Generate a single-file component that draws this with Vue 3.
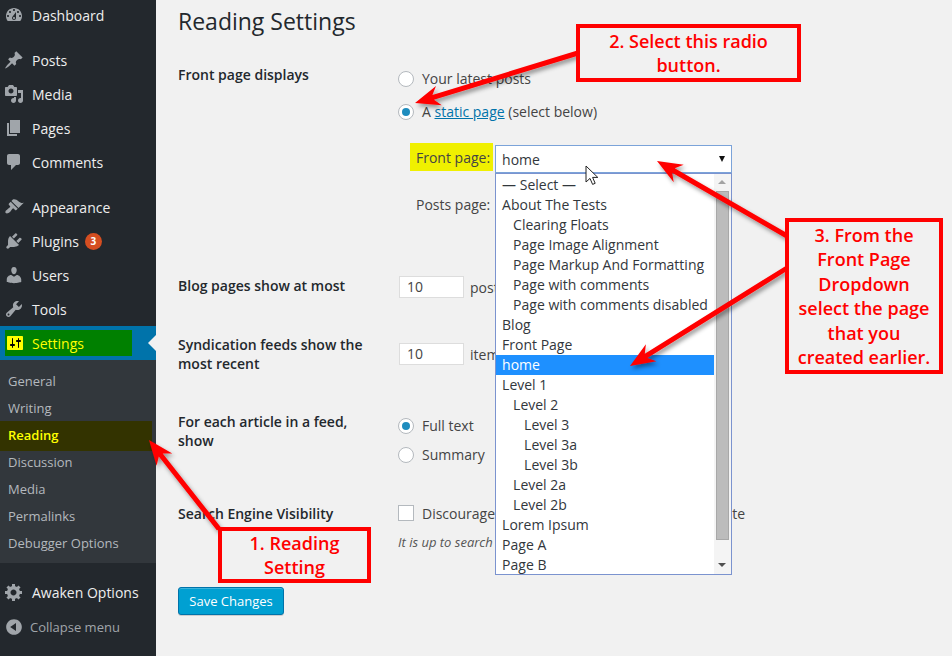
<script setup>
const mainItems = [
  { label: 'Dashboard', icon: 'dashboard' },
  { gap: true },
  { label: 'Posts', icon: 'post' },
  { label: 'Media', icon: 'media' },
  { label: 'Pages', icon: 'page' },
  { label: 'Comments', icon: 'comments' },
  { gap: true },
  { label: 'Appearance', icon: 'appearance' },
  { label: 'Plugins', icon: 'plugins', badge: 3 },
  { label: 'Users', icon: 'users' },
  { label: 'Tools', icon: 'tools' }
]

const icons = {
  dashboard: 'M3.76 16h12.48c1.1-1.37 1.76-3.11 1.76-5 0-4.42-3.58-8-8-8s-8 3.58-8 8c0 1.89.66 3.63 1.76 5zM10 4c.55 0 1 .45 1 1s-.45 1-1 1-1-.45-1-1 .45-1 1-1zM6 6c.55 0 1 .45 1 1s-.45 1-1 1-1-.45-1-1 .45-1 1-1zm8 0c.55 0 1 .45 1 1s-.45 1-1 1-1-.45-1-1 .45-1 1-1zm-5.37 5.55L12 7v6c0 1.1-.9 2-2 2s-2-.9-2-2c0-.57.24-1.08.63-1.45zM4 10c.55 0 1 .45 1 1s-.45 1-1 1-1-.45-1-1 .45-1 1-1zm12 0c.55 0 1 .45 1 1s-.45 1-1 1-1-.45-1-1 .45-1 1-1zm-5 3c0-.55-.45-1-1-1s-1 .45-1 1 .45 1 1 1 1-.45 1-1z',
  post: 'M10.44 3.02l1.82-1.82 6.36 6.35-1.83 1.82c-1.05-.68-2.48-.57-3.41.36l-.75.75c-.92.93-1.04 2.35-.35 3.41l-1.83 1.82-2.41-2.41-2.8 2.79c-.42.42-3.38 2.71-3.8 2.29s1.86-3.39 2.28-3.81l2.79-2.79L4.1 9.36l1.83-1.82c1.05.69 2.48.57 3.4-.36l.75-.75c.93-.92 1.05-2.35.36-3.41z',
  media: 'M13 11V4c0-.55-.45-1-1-1h-1.67L9 1H5L3.67 3H2c-.55 0-1 .45-1 1v7c0 .55.45 1 1 1h10c.55 0 1-.45 1-1zM7 4.5c1.38 0 2.5 1.12 2.5 2.5S8.38 9.5 7 9.5 4.5 8.38 4.5 7 5.62 4.5 7 4.5zM14 6h5v10.5c0 1.38-1.12 2.5-2.5 2.5S14 17.88 14 16.5s1.12-2.5 2.5-2.5c.17 0 .34.02.5.05V9h-3V6zm-4 8.05V13h2v3.5c0 1.38-1.12 2.5-2.5 2.5S7 17.88 7 16.5 8.12 14 9.5 14c.17 0 .34.02.5.05z',
  page: 'M6 15V2h10v13H6zm-1 1h8v2H3V5h2v11z',
  comments: 'M5 2h9c1.1 0 2 .9 2 2v7c0 1.1-.9 2-2 2h-2l-5 5v-5H5c-1.1 0-2-.9-2-2V4c0-1.1.9-2 2-2z',
  appearance: 'M14.48 11.06L7.41 3.99l1.5-1.5c.5-.56 2.3-.47 3.51.32 1.21.8 1.43 1.28 2.91 2.1 1.18.64 2.45 1.26 4.45.85zm-.71.71L6.7 4.7 4.93 6.47c-.39.39-.39 1.02 0 1.41l1.06 1.06c.39.39.39 1.03 0 1.42-.6.6-1.43 1.11-2.21 1.69-.35.26-.7.53-1.01.84C1.43 13.23.91 15.24 1.76 16.09c.85.85 2.86.33 4.22-1.01.31-.31.58-.66.84-1.01.58-.78 1.09-1.61 1.69-2.21.39-.39 1.03-.39 1.42 0l1.06 1.06c.39.39 1.02.39 1.41 0z',
  plugins: 'M13.11 4.36L9.87 7.6 8 5.73l3.24-3.24c.35-.34 1.05-.2 1.56.32.52.51.66 1.21.31 1.55zm-8 1.77l.91-1.12 9.01 9.01-1.19.84c-.71.71-2.63 1.16-3.82 1.16H6.14L4.9 17.26c-.59.59-1.54.59-2.12 0-.59-.58-.59-1.53 0-2.12l1.24-1.24v-3.88c0-1.13.4-3.19 1.09-3.89zm7.26 3.97l3.24-3.24c.34-.35 1.04-.21 1.55.31.52.51.66 1.21.31 1.55l-3.24 3.25z',
  users: 'M10 9.25c-2.27 0-2.73-3.44-2.73-3.44C7 4.02 7.82 2 9.97 2c2.16 0 2.98 2.02 2.71 3.81 0 0-.41 3.44-2.68 3.44zm0 2.57L12.72 10c2.39 0 4.52 2.33 4.52 4.53v2.49s-3.65 1.13-7.24 1.13c-3.65 0-7.24-1.13-7.24-1.13v-2.49c0-2.25 1.94-4.48 4.47-4.48z',
  tools: 'M16.68 9.77c-1.34 1.34-3.3 1.67-4.95.99l-5.41 6.52c-.99.99-2.59.99-3.58 0s-.99-2.59 0-3.57l6.52-5.42c-.68-1.65-.35-3.61.99-4.95 1.28-1.28 3.12-1.62 4.72-1.06l-2.89 2.89 2.82 2.82 2.86-2.87c.53 1.58.18 3.39-1.08 4.65zM3.81 16.21c.4.39 1.04.39 1.43 0 .4-.4.4-1.04 0-1.43-.39-.4-1.03-.4-1.43 0-.39.39-.39 1.03 0 1.43z',
  settings: 'M18 16V4c0-.55-.45-1-1-1H3c-.55 0-1 .45-1 1v12c0 .55.45 1 1 1h14c.55 0 1-.45 1-1zM8 11h1c.55 0 1 .45 1 1s-.45 1-1 1H8v1.5c0 .28-.22.5-.5.5s-.5-.22-.5-.5V13H6c-.55 0-1-.45-1-1s.45-1 1-1h1V5.5c0-.28.22-.5.5-.5s.5.22.5.5V11zm5-2h-1c-.55 0-1-.45-1-1s.45-1 1-1h1V5.5c0-.28.22-.5.5-.5s.5.22.5.5V7h1c.55 0 1 .45 1 1s-.45 1-1 1h-1v5.5c0 .28-.22.5-.5.5s-.5-.22-.5-.5V9z',
  gear: 'M18 12h-2.18c-.17.7-.44 1.35-.81 1.93l1.54 1.54-2.1 2.1-1.54-1.54c-.58.36-1.23.63-1.91.79V19H8v-2.18c-.68-.16-1.33-.43-1.91-.79l-1.54 1.54-2.12-2.12 1.54-1.54c-.36-.58-.63-1.23-.79-1.91H1V9.03h2.17c.16-.7.44-1.35.8-1.94L2.43 5.55l2.1-2.1 1.54 1.54c.58-.37 1.24-.64 1.93-.81V2h3v2.18c.68.16 1.33.43 1.91.79l1.54-1.54 2.12 2.12-1.54 1.54c.36.59.64 1.24.8 1.94H18V12zm-8.5 1.5c1.66 0 3-1.34 3-3s-1.34-3-3-3-3 1.34-3 3 1.34 3 3 3z',
  collapse: 'M10 2.16c4.33 0 7.84 3.51 7.84 7.84s-3.51 7.84-7.84 7.84S2.16 14.33 2.16 10 5.71 2.16 10 2.16zm2 11.72V6.12L6.18 9.97z'
}

const subItems = ['General', 'Writing', 'Reading', 'Discussion', 'Media', 'Permalinks', 'Debugger Options']

const pages = [
  { name: '— Select —', level: 0 },
  { name: 'About The Tests', level: 0 },
  { name: 'Clearing Floats', level: 1 },
  { name: 'Page Image Alignment', level: 1 },
  { name: 'Page Markup And Formatting', level: 1 },
  { name: 'Page with comments', level: 1 },
  { name: 'Page with comments disabled', level: 1 },
  { name: 'Blog', level: 0 },
  { name: 'Front Page', level: 0 },
  { name: 'home', level: 0, selected: true },
  { name: 'Level 1', level: 0 },
  { name: 'Level 2', level: 1 },
  { name: 'Level 3', level: 2 },
  { name: 'Level 3a', level: 2 },
  { name: 'Level 3b', level: 2 },
  { name: 'Level 2a', level: 1 },
  { name: 'Level 2b', level: 1 },
  { name: 'Lorem Ipsum', level: 0 },
  { name: 'Page A', level: 0 },
  { name: 'Page B', level: 0 }
]

const arrows = [
  { from: [219, 529], tip: [149, 440] },
  { from: [578, 53], tip: [415, 103] },
  { from: [787, 236], tip: [657, 161] },
  { from: [787, 268], tip: [630, 366] }
]

// shaft plus a wedge head, pointing from -> tip
const arrowPoints = ({ from, tip }) => {
  const dx = tip[0] - from[0]
  const dy = tip[1] - from[1]
  const len = Math.hypot(dx, dy)
  const ux = dx / len
  const uy = dy / len
  const nx = -uy
  const ny = ux
  const at = (along, side) =>
    `${(tip[0] - ux * along + nx * side).toFixed(1)},${(tip[1] - uy * along + ny * side).toFixed(1)}`
  const headLen = 25
  return [
    at(len, 2.5),
    at(headLen - 6, 2.5),
    at(headLen, 10),
    at(0, 0),
    at(headLen, -10),
    at(headLen - 6, -2.5),
    at(len, -2.5)
  ].join(' ')
}
</script>

<template>
  <div class="page">
    <aside class="sidebar">
      <ul class="menu">
        <template v-for="(item, i) in mainItems" :key="i">
          <li v-if="item.gap" class="menu-gap"></li>
          <li v-else class="menu-item">
            <svg class="menu-icon" viewBox="0 0 20 20"><path :d="icons[item.icon]" /></svg>
            <span>{{ item.label }}</span>
            <span v-if="item.badge" class="badge">{{ item.badge }}</span>
          </li>
        </template>
        <li class="menu-item current">
          <div class="settings-mark">
            <svg class="menu-icon" viewBox="0 0 20 20">
              <rect x="3" y="4" width="14" height="12" fill="#000" />
              <path :d="icons.settings" fill="#ff0" />
            </svg>
            <span>Settings</span>
          </div>
          <i class="current-notch"></i>
        </li>
      </ul>
      <ul class="submenu">
        <li v-for="sub in subItems" :key="sub" :class="{ active: sub === 'Reading' }">{{ sub }}</li>
      </ul>
      <ul class="menu lower">
        <li class="menu-item">
          <svg class="menu-icon" viewBox="0 0 20 20"><path :d="icons.gear" /></svg>
          <span>Awaken Options</span>
        </li>
        <li class="menu-item collapse">
          <svg class="menu-icon" viewBox="0 0 20 20"><path :d="icons.collapse" /></svg>
          <span>Collapse menu</span>
        </li>
      </ul>
    </aside>

    <main class="content">
      <h1>Reading Settings</h1>

      <section class="row front-row">
        <div class="row-label">Front page displays</div>
        <div class="row-field">
          <label class="choice first"><i class="radio"></i>Your latest posts</label>
          <label class="choice second"><i class="radio checked"></i>A&nbsp;<a class="link">static page</a>&nbsp;(select below)</label>
          <div class="page-select">
            <span class="select-label marked">Front page:</span>
            <div class="select-box">
              <span>home</span>
              <i class="select-caret"></i>
              <div class="dropdown">
                <ul class="options">
                  <li
                    v-for="p in pages"
                    :key="p.name"
                    :class="['option', 'lv' + p.level, { selected: p.selected }]"
                  >{{ p.name }}</li>
                </ul>
                <div class="scrollbar">
                  <i class="scroll-up"></i>
                  <div class="scroll-track"><div class="scroll-thumb"></div></div>
                  <i class="scroll-down"></i>
                </div>
              </div>
            </div>
          </div>
          <div class="page-select posts">
            <span class="select-label">Posts page:</span>
          </div>
        </div>
      </section>

      <section class="row blog-row">
        <div class="row-label">Blog pages show at most</div>
        <div class="row-field inline">
          <span class="num-input">10</span>
          <span>posts per page</span>
        </div>
      </section>

      <section class="row feeds-row">
        <div class="row-label">Syndication feeds show the most recent</div>
        <div class="row-field inline feeds-field">
          <span class="num-input">10</span>
          <span>items</span>
        </div>
      </section>

      <section class="row article-row">
        <div class="row-label">For each article in a feed, show</div>
        <div class="row-field article-field">
          <label class="choice"><i class="radio checked"></i>Full text</label>
          <label class="choice third"><i class="radio"></i>Summary</label>
        </div>
      </section>

      <section class="row search-row">
        <div class="row-label">Search Engine Visibility</div>
        <div class="row-field search-field">
          <label class="choice"><i class="checkbox"></i>Discourage search engines from indexing this site</label>
          <p class="hint">It is up to search engines to honor this request.</p>
        </div>
      </section>

      <button class="save" type="button">Save Changes</button>
    </main>

    <svg class="arrows" viewBox="0 0 952 656">
      <defs>
        <filter id="arrow-shadow" x="-20%" y="-20%" width="140%" height="140%">
          <feDropShadow dx="2" dy="3" stdDeviation="2" flood-color="#000" flood-opacity="0.4" />
        </filter>
      </defs>
      <polygon
        v-for="(a, i) in arrows"
        :key="i"
        :points="arrowPoints(a)"
        fill="#ff0000"
        filter="url(#arrow-shadow)"
      />
    </svg>

    <svg class="cursor" width="14" height="22" viewBox="0 0 14 22">
      <path d="M1 1v16l4-3.6 2.6 6 2.6-1.1-2.6-5.9h5.2z" fill="#fff" stroke="#222" stroke-width="1" />
    </svg>

    <div class="note note-reading">1. Reading Setting</div>
    <div class="note note-radio">2. Select this radio button.</div>
    <div class="note note-front">3. From the Front Page Dropdown select the page that you created earlier.</div>
  </div>
</template>

<style scoped>
.page {
  position: relative;
  display: flex;
  width: 952px;
  height: 656px;
  overflow: hidden;
  background: #f1f1f1;
  font-family: "Open Sans", "Liberation Sans", sans-serif;
  font-size: 14px;
  color: #444;
}

ul {
  list-style: none;
  margin: 0;
  padding: 0;
}

/* sidebar */
.sidebar {
  flex: 0 0 156px;
  background: #23282d;
  color: #eee;
}

.menu-item {
  position: relative;
  display: flex;
  align-items: center;
  height: 34px;
  padding-left: 4px;
  box-sizing: border-box;
}

.menu:first-child {
  margin-top: -2px;
}

.menu-gap {
  height: 11px;
}

.menu-icon {
  flex: 0 0 20px;
  width: 20px;
  height: 20px;
  margin-right: 8px;
  fill: #a0a5aa;
}

.badge {
  width: 17px;
  height: 17px;
  margin-left: 6px;
  border-radius: 50%;
  background: #d54e21;
  color: #fff;
  font-size: 10px;
  font-weight: 700;
  line-height: 17px;
  text-align: center;
}

.current {
  background: #0073aa;
  color: #ff0;
}

.settings-mark {
  display: flex;
  align-items: center;
  width: 127px;
  height: 26px;
  margin-left: 1px;
  background: #008000;
}

.settings-mark .menu-icon {
  margin-right: 7px;
}

.current-notch {
  position: absolute;
  right: 0;
  top: 9px;
  border: 8px solid transparent;
  border-right-color: #f1f1f1;
  border-left-width: 0;
}

.submenu {
  padding: 8px 0 6px;
  background: #32373c;
  color: #b4b9be;
  font-size: 13px;
}

.submenu li {
  height: 27px;
  padding-left: 8px;
  line-height: 26px;
}

.submenu .active {
  position: relative;
  color: #ff0;
  font-weight: 600;
  z-index: 0;
}

.submenu .active::before {
  content: '';
  position: absolute;
  left: 0;
  top: -1px;
  width: 152px;
  height: 30px;
  background: #333300;
  z-index: -1;
}

.lower {
  margin-top: 12px;
}

.collapse {
  margin-top: 1px;
  color: #a0a5aa;
  font-size: 13px;
}

.collapse .menu-icon {
  margin-right: 6px;
}

/* settings form */
.content {
  flex: 1;
  padding: 7px 0 0 22px;
  min-width: 0;
}

h1 {
  margin: 0;
  font-size: 23px;
  font-weight: 400;
  line-height: 29px;
  color: #23282d;
}

.row {
  display: flex;
}

.row-label {
  flex: 0 0 200px;
  margin-right: 20px;
  color: #23282d;
  font-weight: 600;
  line-height: 19px;
}

.row-field {
  flex: 1;
  min-width: 0;
  white-space: nowrap;
}

.inline {
  display: flex;
  align-items: center;
  gap: 6px;
  height: 22px;
  margin-left: 1px;
}

.front-row {
  margin-top: 29px;
}

.choice {
  display: flex;
  align-items: center;
  height: 20px;
}

.first {
  margin-top: 3px;
}

.second {
  margin-top: 13px;
}

.third {
  margin-top: 9px;
}

.radio {
  position: relative;
  flex: 0 0 16px;
  width: 16px;
  height: 16px;
  margin-top: 2px;
  margin-right: 8px;
  border: 1px solid #b4b9be;
  border-radius: 50%;
  background: #fff;
  box-sizing: border-box;
}

.radio.checked::after {
  content: '';
  position: absolute;
  left: 3px;
  top: 3px;
  width: 8px;
  height: 8px;
  border-radius: 50%;
  background: #1e8cbe;
}

.checkbox {
  flex: 0 0 16px;
  width: 16px;
  height: 16px;
  margin-right: 8px;
  border: 1px solid #b4b9be;
  background: #fff;
  box-sizing: border-box;
}

.link {
  color: #0073aa;
  text-decoration: underline;
}

.page-select {
  display: flex;
  align-items: center;
  margin: 24px 0 0 12px;
  height: 28px;
}

.page-select.posts {
  margin-top: 18px;
}

.select-label {
  flex: 0 0 auto;
  padding: 0 3px 0 6px;
  margin-right: 2px;
  line-height: 28px;
}

.marked {
  margin-top: -4px;
  padding-top: 2px;
  line-height: 26px;
  background: #f0f000;
}

.select-box {
  position: relative;
  display: flex;
  align-items: center;
  width: 237px;
  height: 28px;
  padding-left: 6px;
  border: 1px solid #7ba3d9;
  background: #fff;
  box-sizing: border-box;
  color: #32373c;
}

.select-caret {
  position: absolute;
  right: 6px;
  top: 10px;
  border: 3px solid transparent;
  border-top: 6px solid #111;
  border-bottom-width: 0;
}

.dropdown {
  position: absolute;
  left: -1px;
  top: 27px;
  z-index: 2;
  display: flex;
  width: 237px;
  height: 402px;
  border: 1px solid #7b93cf;
  background: #fff;
  box-sizing: border-box;
}

.options {
  flex: 1;
  min-width: 0;
  padding-top: 1px;
}

.option {
  height: 20px;
  padding-left: 6px;
  line-height: 20px;
  color: #32373c;
}

.lv1 {
  padding-left: 17px;
}

.lv2 {
  padding-left: 28px;
}

.option.selected {
  background: #1e90ff;
  color: #fff;
}

.scrollbar {
  display: flex;
  flex-direction: column;
  flex: 0 0 17px;
  width: 17px;
  background: #f4f4f4;
}

.scroll-up,
.scroll-down {
  flex: 0 0 17px;
  position: relative;
}

.scroll-up::after,
.scroll-down::after {
  content: '';
  position: absolute;
  left: 4px;
  border: 4px solid transparent;
}

.scroll-up::after {
  top: 6px;
  border-bottom: 4px solid #a3a3a3;
  border-top-width: 0;
}

.scroll-down::after {
  top: 6px;
  border-top: 4px solid #505050;
  border-bottom-width: 0;
}

.scroll-track {
  flex: 1;
  padding: 0 2px;
}

.scroll-thumb {
  height: 349px;
  background: #bcbcbc;
  border: 1px solid #a8a8a8;
  box-sizing: border-box;
}

.blog-row {
  margin-top: 57px;
}

.num-input {
  display: block;
  width: 65px;
  height: 22px;
  padding-left: 7px;
  border: 1px solid #ddd;
  background: #fff;
  box-sizing: border-box;
  line-height: 20px;
}

.feeds-row {
  margin-top: 37px;
}

.feeds-field {
  margin-top: 8px;
}

.article-row {
  margin-top: 39px;
}

.article-field {
  margin-top: 3px;
}

.search-row {
  margin-top: 40px;
}

.search-field {
  margin-top: -1px;
}

.hint {
  margin: 10px 0 0;
  font-style: italic;
  font-size: 13px;
  color: #555;
}

.save {
  display: block;
  width: 106px;
  height: 28px;
  margin-top: 36px;
  padding: 0;
  border: 1px solid #0073aa;
  border-radius: 3px;
  background: #00a0d2;
  box-shadow: inset 0 1px 0 rgba(120, 200, 230, 0.5), 0 1px 0 rgba(0, 0, 0, 0.15);
  color: #fff;
  font-family: inherit;
  font-size: 13px;
}

/* annotations sit on top of the screenshot */
.arrows {
  position: absolute;
  left: 0;
  top: 0;
  width: 952px;
  height: 656px;
  z-index: 3;
  pointer-events: none;
}

.cursor {
  position: absolute;
  left: 585px;
  top: 165px;
  z-index: 4;
}

.note {
  position: absolute;
  z-index: 5;
  display: flex;
  align-items: center;
  justify-content: center;
  border: 4px solid #ff0000;
  background: #f1f1f1;
  box-sizing: border-box;
  color: #ff0000;
  font-size: 18px;
  font-weight: 600;
  line-height: 24.5px;
  text-align: center;
}

.note-reading {
  left: 218px;
  top: 527px;
  width: 153px;
  height: 56px;
  padding: 0 24px;
}

.note-radio {
  left: 576px;
  top: 24px;
  width: 225px;
  height: 58px;
  padding: 0 20px;
}

.note-front {
  left: 785px;
  top: 218px;
  width: 158px;
  height: 156px;
  padding: 0 6px;
}
</style>

<style>
html,
body {
  margin: 0;
  background: #f1f1f1;
}
</style>
